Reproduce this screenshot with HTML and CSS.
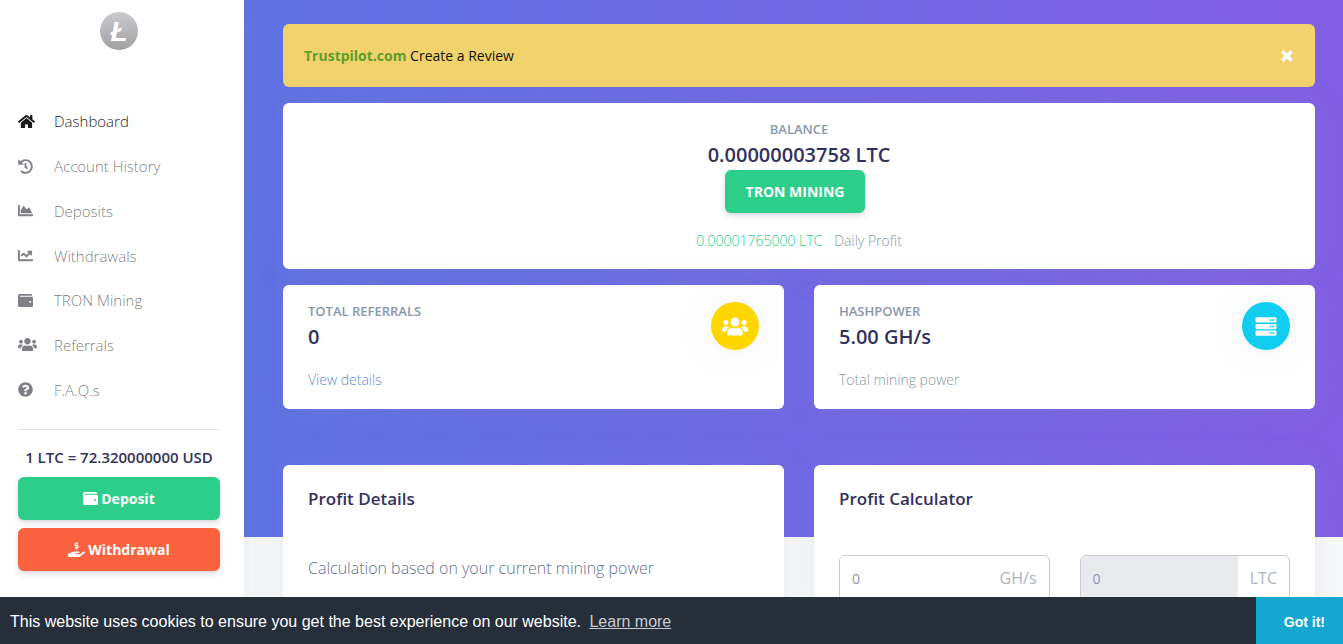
FILE: index.html
```html
<!DOCTYPE html>
<html lang="en">
<head>
  <meta charset="UTF-8" />
  <meta name="viewport" content="width=device-width, initial-scale=1.0"/>
  <title>Dashboard</title>
  <link rel="stylesheet" href="styles.css">
</head>
<body>
  <!-- icon set -->
  <svg class="icon-defs" aria-hidden="true">
    <symbol id="i-home" viewBox="0 0 576 512"><path d="M280.37 148.26L96 300.11V464a16 16 0 0 0 16 16l112.06-.29a16 16 0 0 0 15.92-16V368a16 16 0 0 1 16-16h64a16 16 0 0 1 16 16v95.64a16 16 0 0 0 16 16.05L464 480a16 16 0 0 0 16-16V300L295.67 148.26a12.19 12.19 0 0 0-15.3 0zM571.6 251.47L488 182.56V44.05a12 12 0 0 0-12-12h-56a12 12 0 0 0-12 12v72.61L318.47 43a48 48 0 0 0-61 0L4.34 251.47a12 12 0 0 0-1.6 16.9l25.5 31A12 12 0 0 0 45.15 301l235.22-193.74a12.19 12.19 0 0 1 15.3 0L530.9 301a12 12 0 0 0 16.9-1.6l25.5-31a12 12 0 0 0-1.7-16.93z"/></symbol>
    <symbol id="i-history" viewBox="0 0 512 512"><path d="M504 255.531c.253 136.64-111.18 248.372-247.82 248.468-59.015.042-113.223-20.53-155.822-54.911-11.077-8.94-11.905-25.541-1.839-35.607l11.267-11.267c8.609-8.609 22.353-9.551 31.891-1.984C173.062 425.135 212.781 440 256 440c101.705 0 184-82.311 184-184 0-101.705-82.311-184-184-184-48.814 0-93.149 18.969-126.068 49.932l50.754 50.754c10.08 10.08 2.941 27.314-11.313 27.314H24c-8.837 0-16-7.163-16-16V38.627c0-14.254 17.234-21.393 27.314-11.314l49.372 49.372C129.209 34.136 189.552 8 256 8c136.81 0 247.747 110.78 248 247.531zm-180.912 78.784l9.823-12.63c8.138-10.463 6.253-25.542-4.21-33.679L288 256.349V152c0-13.255-10.745-24-24-24h-16c-13.255 0-24 10.745-24 24v135.651l65.409 50.874c10.463 8.137 25.541 6.253 33.679-4.21z"/></symbol>
    <symbol id="i-area" viewBox="0 0 512 512"><path d="M500 384c6.6 0 12 5.4 12 12v40c0 6.6-5.4 12-12 12H12c-6.6 0-12-5.4-12-12V76c0-6.6 5.4-12 12-12h40c6.6 0 12 5.4 12 12v308h436zM372.7 159.5L288 216l-85.3-113.7c-5.1-6.8-15.5-6.3-19.9 1L96 248v104h384l-89.9-187.8c-3.2-6.5-11.4-8.7-17.4-4.7z"/></symbol>
    <symbol id="i-line" viewBox="0 0 512 512"><path d="M496 384H64V80c0-8.84-7.16-16-16-16H16C7.16 64 0 71.16 0 80v336c0 17.67 14.33 32 32 32h464c8.84 0 16-7.16 16-16v-32c0-8.84-7.16-16-16-16zM464 96H345.94c-21.38 0-32.09 25.85-16.97 40.97l32.4 32.4L288 242.75l-73.37-73.37c-12.5-12.5-32.76-12.5-45.25 0l-68.69 68.69c-6.25 6.25-6.25 16.38 0 22.63l22.62 22.62c6.25 6.25 16.38 6.25 22.63 0L192 237.25l73.37 73.37c12.5 12.5 32.76 12.5 45.25 0l96-96 32.4 32.4c15.12 15.12 40.97 4.41 40.97-16.97V112c.01-8.84-7.15-16-15.99-16z"/></symbol>
    <symbol id="i-wallet" viewBox="0 0 512 512"><path d="M461.2 128H80c-8.84 0-16-7.16-16-16s7.16-16 16-16h384c8.84 0 16-7.16 16-16 0-26.51-21.49-48-48-48H64C28.65 32 0 60.65 0 96v320c0 35.35 28.65 64 64 64h397.2c28.02 0 50.8-21.53 50.8-48V176c0-26.47-22.78-48-50.8-48zM416 336c-17.67 0-32-14.33-32-32s14.33-32 32-32 32 14.33 32 32-14.33 32-32 32z"/></symbol>
    <symbol id="i-users" viewBox="0 0 640 512"><path d="M96 224c35.3 0 64-28.7 64-64s-28.7-64-64-64-64 28.7-64 64 28.7 64 64 64zm448 0c35.3 0 64-28.7 64-64s-28.7-64-64-64-64 28.7-64 64 28.7 64 64 64zm32 32h-64c-17.6 0-33.5 7.1-45.1 18.6 40.3 22.1 68.9 62 75.1 109.4h66c17.7 0 32-14.3 32-32v-32c0-35.3-28.7-64-64-64zm-256 0c61.9 0 112-50.1 112-112S381.9 32 320 32 208 82.1 208 144s50.1 112 112 112zm76.8 32h-8.3c-20.8 10-43.9 16-68.5 16s-47.6-6-68.5-16h-8.3C179.6 288 128 339.6 128 403.2V432c0 26.5 21.5 48 48 48h288c26.5 0 48-21.5 48-48v-28.8c0-63.6-51.6-115.2-115.2-115.2zm-223.7-13.4C161.5 263.1 145.6 256 128 256H64c-35.3 0-64 28.7-64 64v32c0 17.7 14.3 32 32 32h65.9c6.3-47.4 34.9-87.3 75.2-109.4z"/></symbol>
    <symbol id="i-question" viewBox="0 0 512 512"><path d="M504 256c0 136.997-111.043 248-248 248S8 392.997 8 256C8 119.083 119.043 8 256 8s248 111.083 248 248zM262.655 90c-54.497 0-89.255 22.957-116.549 63.758-3.536 5.286-2.353 12.415 2.715 16.258l34.699 26.31c5.205 3.947 12.621 3.008 16.665-2.122 17.864-22.658 30.113-35.797 57.303-35.797 20.429 0 45.698 13.148 45.698 32.958 0 14.976-12.363 22.667-32.534 33.976C247.128 238.528 216 254.941 216 296v4c0 6.627 5.373 12 12 12h56c6.627 0 12-5.373 12-12v-1.333c0-28.462 83.186-29.647 83.186-106.667 0-58.002-60.165-102-116.531-102zM256 338c-25.365 0-46 20.635-46 46 0 25.364 20.635 46 46 46s46-20.636 46-46c0-25.365-20.635-46-46-46z"/></symbol>
    <symbol id="i-hand" viewBox="0 0 576 512"><path d="M257.6 144.3l50 14.3c3.6 1 6.1 4.4 6.1 8.1 0 4.6-3.8 8.4-8.4 8.4h-32.8c-3.6 0-7.1-.8-10.3-2.2-4.8-2.2-10.4-1.7-14.1 2l-17.5 17.5c-5.3 5.3-4.7 14.3 1.5 18.4 9.5 6.3 20.3 10.1 31.8 11.5V240c0 8.8 7.2 16 16 16h16c8.8 0 16-7.2 16-16v-17.6c30.3-3.6 53.3-31 49.3-63-2.9-23-20.7-41.3-42.9-47.7l-50-14.3c-3.6-1-6.1-4.4-6.1-8.1 0-4.6 3.8-8.4 8.4-8.4h32.8c3.6 0 7.1.8 10.3 2.2 4.8 2.2 10.4 1.7 14.1-2l17.5-17.5c5.3-5.3 4.7-14.3-1.5-18.4-9.5-6.3-20.3-10.1-31.8-11.5V16c0-8.8-7.2-16-16-16h-16c-8.8 0-16 7.2-16 16v17.6c-30.3 3.6-53.3 31-49.3 63 2.9 23 20.6 41.3 42.9 47.7zM565.3 328.1c-11.8-10.7-30.2-10-42.6 0L430.3 402c-11.3 9.1-25.4 14-40 14H272c-8.8 0-16-7.2-16-16s7.2-16 16-16h78.3c15.9 0 30.7-10.9 33.3-26.6 3.3-20-12.1-37.4-31.6-37.4H192c-27 0-53.1 9.3-74.1 26.3L71.4 384H16c-8.8 0-16 7.2-16 16v96c0 8.8 7.2 16 16 16h356.8c14.5 0 28.6-4.9 40-14L564 377c15.2-12.1 16.4-35.3 1.3-48.9z"/></symbol>
    <symbol id="i-server" viewBox="0 0 512 512"><path fill-rule="evenodd" d="M32 32h448a32 32 0 0 1 32 32v64a32 32 0 0 1-32 32H32a32 32 0 0 1-32-32V64a32 32 0 0 1 32-32zm400 40a24 24 0 1 0 0 48 24 24 0 0 0 0-48zm-64 0a24 24 0 1 0 0 48 24 24 0 0 0 0-48zM32 192h448a32 32 0 0 1 32 32v64a32 32 0 0 1-32 32H32a32 32 0 0 1-32-32v-64a32 32 0 0 1 32-32zm400 40a24 24 0 1 0 0 48 24 24 0 0 0 0-48zm-64 0a24 24 0 1 0 0 48 24 24 0 0 0 0-48zM32 352h448a32 32 0 0 1 32 32v64a32 32 0 0 1-32 32H32a32 32 0 0 1-32-32v-64a32 32 0 0 1 32-32zm400 40a24 24 0 1 0 0 48 24 24 0 0 0 0-48zm-64 0a24 24 0 1 0 0 48 24 24 0 0 0 0-48z"/></symbol>
    <symbol id="i-close" viewBox="0 0 12 12"><path d="M2 2l8 8M10 2l-8 8" fill="none" stroke="currentColor" stroke-width="3"/></symbol>
  </svg>

  <div class="app">
    <nav class="sidebar">
      <a class="brand" href="#" aria-label="Home">
        <svg class="logo" viewBox="0 0 40 40">
          <defs>
            <linearGradient id="coin" x1="0" y1="0" x2="0" y2="1">
              <stop offset="0" stop-color="#cbcbd0"/>
              <stop offset="1" stop-color="#a19fa0"/>
            </linearGradient>
          </defs>
          <circle cx="20" cy="20" r="19" fill="url(#coin)"/>
          <text class="logo-mark" x="20" y="30" text-anchor="middle">Ł</text>
        </svg>
      </a>
      <ul class="menu">
        <li><a class="menu-link active" href="#"><svg class="icon icon-wide"><use href="#i-home"/></svg><span>Dashboard</span></a></li>
        <li><a class="menu-link" href="#"><svg class="icon"><use href="#i-history"/></svg><span>Account History</span></a></li>
        <li><a class="menu-link" href="#"><svg class="icon"><use href="#i-area"/></svg><span>Deposits</span></a></li>
        <li><a class="menu-link" href="#"><svg class="icon"><use href="#i-line"/></svg><span>Withdrawals</span></a></li>
        <li><a class="menu-link" href="#"><svg class="icon"><use href="#i-wallet"/></svg><span>TRON Mining</span></a></li>
        <li><a class="menu-link" href="#"><svg class="icon icon-xwide"><use href="#i-users"/></svg><span>Referrals</span></a></li>
        <li><a class="menu-link" href="#"><svg class="icon"><use href="#i-question"/></svg><span>F.A.Q.s</span></a></li>
      </ul>
      <hr class="divider">
      <p class="rate">1 LTC = 72.320000000 USD</p>
      <button class="btn btn-green btn-block"><svg class="icon"><use href="#i-wallet"/></svg>Deposit</button>
      <button class="btn btn-orange btn-block"><svg class="icon icon-wide"><use href="#i-hand"/></svg>Withdrawal</button>
    </nav>

    <main class="main">
      <header class="header">
        <div class="alert">
          <p><a class="alert-link" href="#">Trustpilot.com</a> Create a Review</p>
          <button class="alert-close" aria-label="Close"><svg class="close-icon"><use href="#i-close"/></svg></button>
        </div>

        <section class="card balance">
          <h5 class="label">BALANCE</h5>
          <p class="value">0.00000003758 LTC</p>
          <button class="btn btn-green">TRON MINING</button>
          <p class="note profit"><span class="gain">0.00001765000 LTC</span><span>Daily Profit</span></p>
        </section>

        <div class="row">
          <section class="card stat">
            <div>
              <h5 class="label">TOTAL REFERRALS</h5>
              <p class="value">0</p>
              <p class="note"><a href="#">View details</a></p>
            </div>
            <div class="badge yellow"><svg><use href="#i-users"/></svg></div>
          </section>
          <section class="card stat">
            <div>
              <h5 class="label">HASHPOWER</h5>
              <p class="value">5.00 GH/s</p>
              <p class="note">Total mining power</p>
            </div>
            <div class="badge cyan"><svg><use href="#i-server"/></svg></div>
          </section>
        </div>
      </header>

      <div class="row content">
        <section class="card panel">
          <h3 class="panel-title">Profit Details</h3>
          <p class="panel-text">Calculation based on your current mining power</p>
        </section>
        <section class="card panel">
          <h3 class="panel-title">Profit Calculator</h3>
          <form class="row calc">
            <div class="input-group">
              <input type="text" id="power" placeholder="0">
              <label for="power">GH/s</label>
            </div>
            <div class="input-group disabled">
              <input type="text" id="result" placeholder="0" disabled>
              <label for="result">LTC</label>
            </div>
          </form>
        </section>
      </div>
    </main>
  </div>

  <div class="cookie-bar">
    <p>This website uses cookies to ensure you get the best experience on our website. <a href="#">Learn more</a></p>
    <button class="cookie-btn">Got it!</button>
  </div>
</body>
</html>
```
FILE: styles.css
```css
* {
  box-sizing: border-box;
}

body {
  margin: 0;
  font-family: 'Open Sans', sans-serif;
  font-size: 16px;
  font-weight: 300;
  line-height: 24px;
  color: #525f7f;
  background: #f8f9fb;
}

p, h3, h5, ul {
  margin: 0;
  padding: 0;
}

a {
  text-decoration: none;
}

button, input {
  font-family: inherit;
}

.icon-defs {
  display: none;
}

.app {
  display: flex;
  height: 100vh;
}

/* sidebar */
.sidebar {
  position: relative;
  z-index: 1;
  flex: 0 0 244px;
  padding: 11px 24px 0 18px;
  background: #fff;
  box-shadow: 0 0 32px rgba(136, 152, 170, 0.15);
}

.brand {
  display: flex;
  justify-content: center;
}

.logo {
  width: 40px;
  height: 40px;
}

.logo-mark {
  font-family: 'Liberation Sans', Arial, sans-serif;
  font-size: 28px;
  font-weight: 700;
  font-style: italic;
  fill: #fff;
}

.menu {
  display: flex;
  flex-direction: column;
  height: 313px;
  margin-top: 48px;
  list-style: none;
}

.menu li {
  display: flex;
  flex: 1;
}

.menu-link {
  display: flex;
  flex: 1;
  align-items: center;
  font-size: 15px;
  color: rgba(0, 0, 0, 0.55);
}

.menu-link .icon {
  margin-right: 21px;
  color: #7f7f87;
}

.menu-link .icon-wide {
  margin-right: 19px;
}

.menu-link .icon-xwide {
  margin-right: 17px;
}

.menu-link.active,
.menu-link.active .icon {
  color: rgba(0, 0, 0, 0.9);
}

.icon {
  width: 15px;
  height: 15px;
  fill: currentColor;
}

.icon-wide {
  width: 17px;
}

.icon-xwide {
  width: 19px;
}

.divider {
  margin: 17px 0 15px;
  border: 0;
  border-top: 1px solid #e6e6e6;
}

.rate {
  margin-bottom: 8px;
  font-size: 15px;
  font-weight: 600;
  text-align: center;
  color: #32325d;
}

/* buttons */
.btn {
  display: inline-flex;
  align-items: center;
  justify-content: center;
  height: 43px;
  padding: 0 21px;
  border: 0;
  border-radius: 6px;
  font-size: 14px;
  font-weight: 700;
  color: #fff;
  box-shadow: 0 4px 6px rgba(50, 50, 93, 0.11), 0 1px 3px rgba(0, 0, 0, 0.08);
  cursor: pointer;
}

.btn .icon {
  margin-right: 3px;
}

.btn-block {
  width: 100%;
  margin-bottom: 8px;
}

.btn-green {
  background: #2dce89;
}

.btn-orange {
  background: #fb6340;
}

/* main area */
.main {
  flex: 1;
  min-width: 0;
  overflow-y: auto;
  scrollbar-width: none;
}

.header {
  padding: 24px 28px 128px 39px;
  background: linear-gradient(87deg, #5e72e4, #825ee4);
}

.alert {
  display: flex;
  align-items: center;
  justify-content: space-between;
  height: 63px;
  margin-bottom: 16px;
  padding: 0 21px;
  border-radius: 6px;
  font-size: 14px;
  font-weight: 400;
  color: #111;
  background: #f1d26d;
}

.alert-link {
  font-weight: 700;
  color: #5f9e28;
}

.alert-close {
  display: flex;
  padding: 0;
  border: 0;
  color: #fff;
  background: none;
  cursor: pointer;
}

.close-icon {
  width: 14px;
  height: 14px;
}

.card {
  border-radius: 6px;
  background: #fff;
  box-shadow: 0 0 32px rgba(136, 152, 170, 0.15);
}

.balance {
  display: flex;
  flex-direction: column;
  align-items: center;
  margin-bottom: 16px;
  padding: 17px 24px 16px;
}

.balance .btn {
  margin-right: 8px;
}

.label {
  margin-bottom: 2px;
  font-size: 13px;
  font-weight: 600;
  line-height: 18px;
  color: #8898aa;
}

.value {
  font-size: 20px;
  font-weight: 600;
  line-height: 30px;
  color: #32325d;
}

.note {
  margin-top: 16px;
  font-size: 14px;
  color: #8898aa;
}

.note a {
  color: #5e8ed4;
}

.profit {
  display: flex;
  gap: 12px;
}

.gain {
  color: #2dce89;
}

.row {
  display: flex;
  gap: 30px;
}

.row > * {
  flex: 1;
  min-width: 0;
}

.stat {
  display: flex;
  justify-content: space-between;
  padding: 17px 25px;
}

.badge {
  display: flex;
  align-items: center;
  justify-content: center;
  width: 48px;
  height: 48px;
  border-radius: 50%;
  box-shadow: 0 0 32px rgba(136, 152, 170, 0.15);
}

.badge svg {
  width: 26px;
  height: 21px;
  fill: #fff;
}

.yellow {
  background: #ffd600;
}

.cyan {
  background: #11cdef;
}

.content {
  margin-top: -72px;
  padding: 0 28px 80px 39px;
}

.panel {
  padding: 22px 25px;
}

.panel-title {
  font-size: 17px;
  font-weight: 600;
  color: #32325d;
}

.panel-text {
  margin-top: 45px;
  color: #66718f;
}

.calc {
  margin-top: 44px;
}

.input-group {
  display: flex;
  align-items: center;
  height: 46px;
  border: 1px solid #cacad1;
  border-radius: 6px;
  overflow: hidden;
}

.input-group input {
  flex: 1;
  min-width: 0;
  height: 100%;
  padding: 0 12px;
  border: 0;
  font-size: 14px;
  color: #8898aa;
  background: #fff;
}

.input-group input::placeholder {
  color: #8e93ad;
}

.input-group.disabled input {
  background: #e9eaee;
}

.input-group label {
  padding: 0 12px;
  font-weight: 400;
  color: #adb5bd;
}

/* cookie consent */
.cookie-bar {
  position: fixed;
  right: 0;
  bottom: 0;
  left: 0;
  z-index: 10;
  display: flex;
  align-items: center;
  justify-content: space-between;
  height: 47px;
  padding-left: 10px;
  font-family: 'Liberation Sans', Arial, sans-serif;
  font-weight: 400;
  color: #fff;
  background: #262e3a;
}

.cookie-bar p {
  padding-top: 2px;
}

.cookie-bar a {
  margin-left: 4px;
  text-decoration: underline;
  color: #c9cbce;
}

.cookie-btn {
  height: 100%;
  padding: 2px 18px 0 28px;
  border: 0;
  font-size: 14px;
  font-weight: 700;
  color: #fff;
  background: #14a7d0;
  cursor: pointer;
}
```
